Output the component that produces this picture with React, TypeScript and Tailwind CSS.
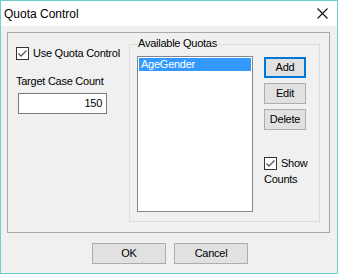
import React from 'react';

const FONT = { fontFamily: '"Liberation Sans", Arial, sans-serif' };

function CheckBox() {
  return (
    <span className="w-[13px] h-[13px] border border-[#333333] bg-white flex items-center justify-center shrink-0">
      <svg width="11" height="11" viewBox="0 0 11 11">
        <path d="M1.5 5.5 L4 8 L9.5 2.5" fill="none" stroke="#555555" strokeWidth="1.3" />
      </svg>
    </span>
  );
}

function Btn({ label, primary, w }: { label: string; primary?: boolean; w: string }) {
  return (
    <button
      className={`${w} h-[21px] bg-[#e1e1e1] text-[11px] text-black flex items-center justify-center ${
        primary ? 'border-2 border-[#0078d7]' : 'border border-[#adadad]'
      }`}
    >
      {label}
    </button>
  );
}

export default function App() {
  return (
    <div
      className="w-[338px] h-[274px] border border-[#6fd0d0] bg-[#f0f0f0] flex flex-col text-black"
      style={FONT}
    >
      {/* Title bar */}
      <div className="h-[25px] bg-white flex items-center justify-between pl-[3px] pr-[9px] shrink-0">
        <span className="text-[12px]">Quota Control</span>
        <svg width="11" height="11" viewBox="0 0 11 11">
          <path d="M0.5 0.5 L10.5 10.5 M10.5 0.5 L0.5 10.5" stroke="#111111" strokeWidth="1.1" />
        </svg>
      </div>

      {/* Body */}
      <div className="pl-[6px] pt-[6px] flex flex-col tracking-[-0.25px]">
        <div className="w-[323px] h-[201px] border border-[#a8a8a8] flex text-[11px]">
          {/* Left column */}
          <div className="w-[121px] pl-[8px] pt-[14px] flex flex-col">
            <div className="flex items-center gap-[4px] h-[13px]">
              <CheckBox />
              <span className="leading-[13px]">Use Quota Control</span>
            </div>
            <div className="mt-[15px] leading-[13px]">Target Case Count</div>
            <div className="mt-[5px] ml-[2px] w-[89px] h-[21px] border border-[#7a7a7a] bg-white flex items-center justify-end pr-[4px]">
              150
            </div>
          </div>

          {/* Available Quotas group */}
          <div className="mt-[11px] w-[191px] h-[178px] border border-[#dcdcdc] relative flex">
            <span className="absolute -top-[8px] left-[7px] bg-[#f0f0f0] px-[1px] leading-[13px]">
              Available Quotas
            </span>
            <div className="ml-[7px] mt-[11px] w-[116px] h-[156px] border border-[#828790] bg-white p-[1px]">
              <div className="h-[13px] bg-[#3399ff] text-white pl-[2px] leading-[13px]">AgeGender</div>
            </div>
            <div className="ml-[11px] mt-[12px] flex flex-col">
              <div className="flex flex-col gap-[5px]">
                <Btn label="Add" primary w="w-[42px]" />
                <Btn label="Edit" w="w-[42px]" />
                <Btn label="Delete" w="w-[42px]" />
              </div>
              <div className="mt-[27px] flex items-center gap-[4px] h-[13px]">
                <CheckBox />
                <span className="leading-[13px]">Show</span>
              </div>
              <div className="mt-[3px] leading-[13px]">Counts</div>
            </div>
          </div>
        </div>

        {/* Bottom buttons */}
        <div className="mt-[10px] w-[326px] flex justify-center gap-[8px]">
          <Btn label="OK" w="w-[74px]" />
          <Btn label="Cancel" w="w-[74px]" />
        </div>
      </div>
    </div>
  );
}
